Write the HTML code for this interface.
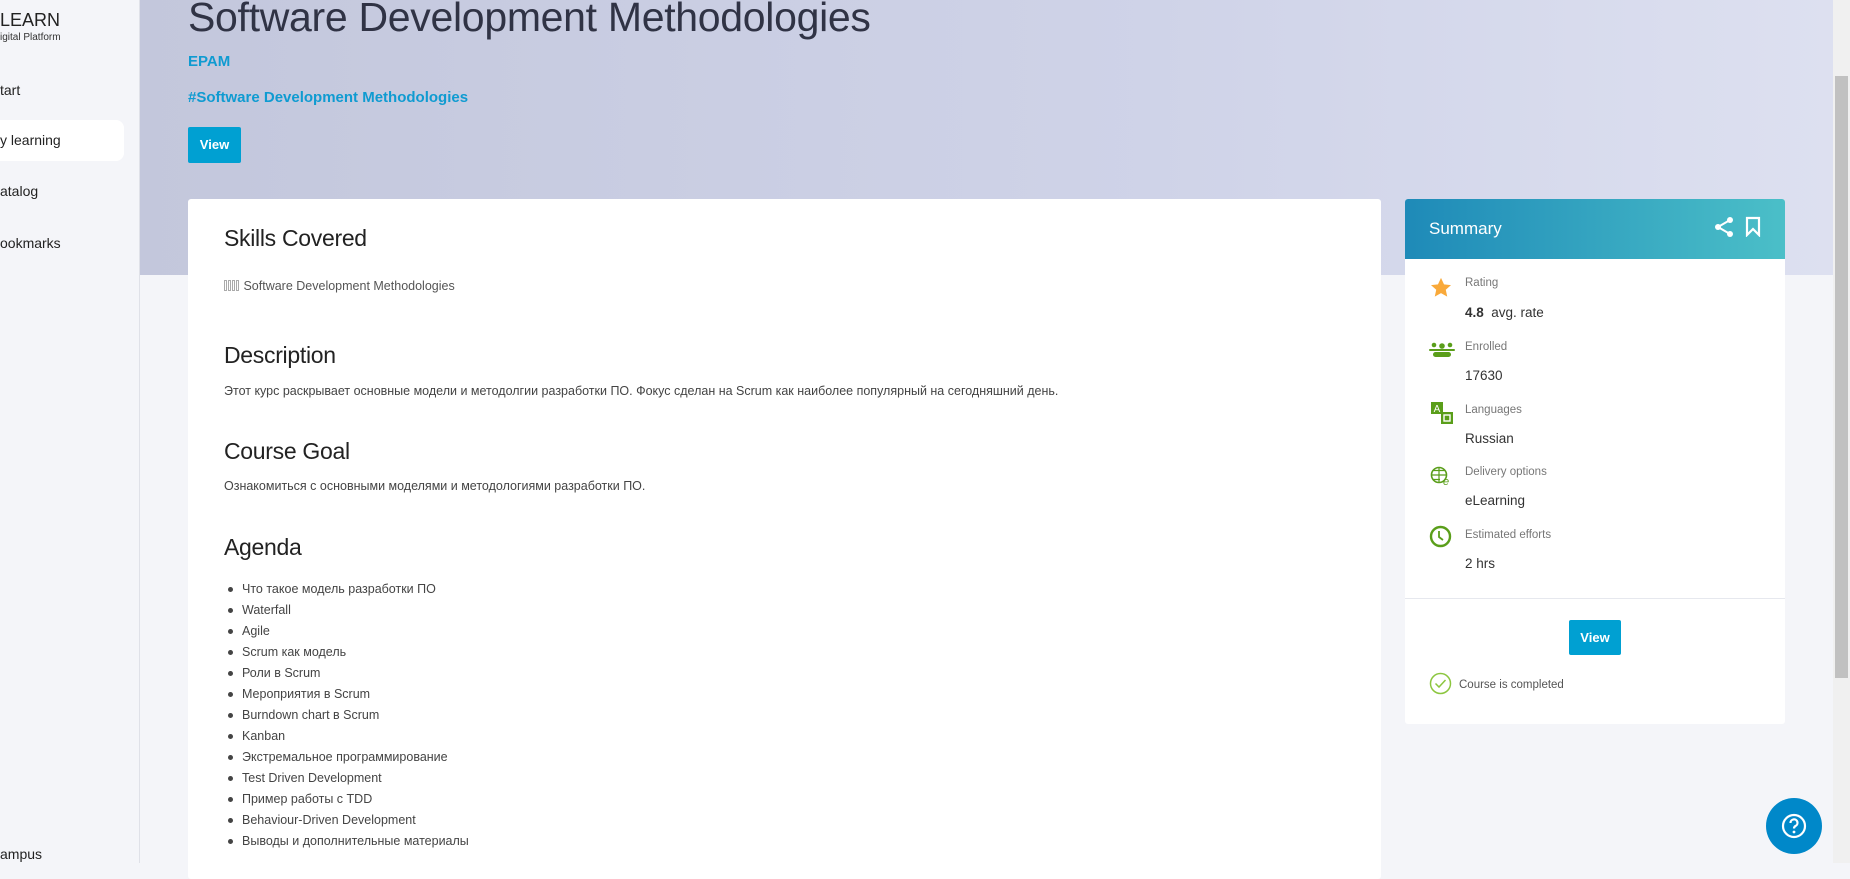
<!DOCTYPE html>
<html><head><meta charset="utf-8"><style>
*{margin:0;padding:0;box-sizing:border-box}
body{width:1850px;height:863px;overflow:hidden;background:#f4f5f9;font-family:"Liberation Sans","Noto Sans CJK SC",sans-serif;color:#464547;position:relative}
.side{position:absolute;left:0;top:0;width:140px;height:863px;background:#f4f5f9;border-right:1px solid #dfe1e8}
.side div{position:absolute;left:0;font-size:14px;color:#222}
.hero{position:absolute;left:140px;top:0;width:1693px;height:275px;background:linear-gradient(90deg,#c3c7dc,#cfd3e8 60%,#dde0f0)}
.t{position:absolute;font-family:"Liberation Sans",sans-serif}
.card{position:absolute;background:#fff;border-radius:3px}
h2{position:absolute;left:36px;font-size:23px;font-weight:normal;color:#222;letter-spacing:-.3px}
.p{position:absolute;left:36px;font-size:12.5px;color:#444}
ul{position:absolute;left:36px;top:380px;list-style:none}
li{height:21px;line-height:21px;font-size:12.5px;padding-left:18px;position:relative;color:#444}
li:before{content:"";position:absolute;left:4px;top:8px;width:5px;height:5px;border-radius:50%;background:#444}
.lbl{position:absolute;left:60px;font-size:11.5px;color:#777}
.val{position:absolute;left:60px;font-size:13.5px;color:#333}
.btn{position:absolute;background:#00a0d2;color:#fff;font-weight:bold;font-size:13px;text-align:center;border-radius:2px}
.sk{display:inline-block;width:3px;height:11px;border:1px solid #aaa;margin-right:1px;vertical-align:-1px}
</style></head><body>
<div class="side">
<div style="top:10px;font-size:18px;color:#222">LEARN</div>
<div style="top:32px;font-size:10px;color:#333">igital Platform</div>
<div style="top:82px">tart</div>
<div style="top:120px;width:124px;height:41px;background:#fff;border-radius:0 8px 8px 0"></div>
<div style="top:132px">y learning</div>
<div style="top:183px">atalog</div>
<div style="top:235px">ookmarks</div>
<div style="top:846px">ampus</div>
</div>
<div class="hero"></div>
<div class="t" style="left:188px;top:-6px;font-size:41px;color:#303345;letter-spacing:-.3px">Software Development Methodologies</div>
<div class="t" style="left:188px;top:53px;font-size:15px;color:#0f9bd1;font-weight:bold">EPAM</div>
<div class="t" style="left:188px;top:89px;font-size:15px;color:#0f9bd1;font-weight:bold">#Software Development Methodologies</div>
<div class="btn" style="left:188px;top:127px;width:53px;height:36px;line-height:36px">View</div>

<div class="card" style="left:188px;top:199px;width:1193px;height:680px">
<h2 style="top:26px">Skills Covered</h2>
<div class="p" style="top:80px;color:#555"><span class="sk"></span><span class="sk"></span><span class="sk"></span><span class="sk"></span> Software Development Methodologies</div>
<h2 style="top:143px">Description</h2>
<div class="p" style="top:185px">Этот курс раскрывает основные модели и методолгии разработки ПО. Фокус сделан на Scrum как наиболее популярный на сегодняшний день.</div>
<h2 style="top:239px">Course Goal</h2>
<div class="p" style="top:280px">Ознакомиться с основными моделями и методологиями разработки ПО.</div>
<h2 style="top:335px">Agenda</h2>
<ul>
<li>Что такое модель разработки ПО</li><li>Waterfall</li><li>Agile</li><li>Scrum как модель</li><li>Роли в Scrum</li><li>Мероприятия в Scrum</li><li>Burndown chart в Scrum</li><li>Kanban</li><li>Экстремальное программирование</li><li>Test Driven Development</li><li>Пример работы с TDD</li><li>Behaviour-Driven Development</li><li>Выводы и дополнительные материалы</li>
</ul>
</div>

<div class="card" style="left:1405px;top:199px;width:380px;height:525px;overflow:hidden">
<div style="height:60px;background:linear-gradient(90deg,#1e8ab8,#4bbfc8);position:relative">
<div style="position:absolute;left:24px;top:20px;color:#fff;font-size:17px">Summary</div>
<svg style="position:absolute;left:308px;top:17px" width="22" height="22" viewBox="0 0 22 22"><g fill="#fff"><circle cx="17" cy="4" r="3"/><circle cx="5" cy="11" r="3"/><circle cx="17" cy="18" r="3"/></g><path d="M17 4L5 11L17 18" stroke="#fff" stroke-width="2" fill="none"/></svg>
<svg style="position:absolute;left:340px;top:17px" width="16" height="21" viewBox="0 0 16 21"><path d="M2 2H14V19L8 13L2 19Z" stroke="#fff" stroke-width="2.2" fill="none"/></svg>
</div>
<svg style="position:absolute;left:25px;top:78px" width="22" height="22" viewBox="0 0 24 24"><path d="M12 1l3.3 7 7.6.8-5.7 5.1 1.6 7.5L12 17.6 5.2 21.4l1.6-7.5L1.1 8.8 8.7 8z" fill="#f9a93a"/></svg>
<div class="lbl" style="top:78px">Rating</div>
<div class="val" style="top:106px"><b>4.8</b>&nbsp; avg. rate</div>
<svg style="position:absolute;left:24px;top:143px" width="26" height="16" viewBox="0 0 26 16"><g fill="#5a9e1a"><circle cx="5" cy="3" r="2.3"/><circle cx="13" cy="4" r="2.8"/><circle cx="21" cy="3" r="2.3"/><rect x="0" y="7" width="26" height="2" rx="1"/><rect x="4" y="10" width="18" height="5" rx="2.5"/></g></svg>
<div class="lbl" style="top:142px">Enrolled</div>
<div class="val" style="top:169px">17630</div>
<svg style="position:absolute;left:25px;top:202px" width="24" height="24" viewBox="0 0 24 24"><rect x="1" y="1" width="12" height="12" fill="#5a9e1a"/><text x="7" y="11" font-size="10" fill="#fff" text-anchor="middle" font-family="Liberation Sans">A</text><rect x="11" y="11" width="12" height="12" fill="#5a9e1a"/><rect x="14" y="14" width="6" height="6" fill="none" stroke="#fff" stroke-width="1.4"/></svg>
<div class="lbl" style="top:205px">Languages</div>
<div class="val" style="top:232px">Russian</div>
<svg style="position:absolute;left:25px;top:267px" width="20" height="20" viewBox="0 0 20 20"><circle cx="9" cy="9" r="7.5" fill="none" stroke="#5a9e1a" stroke-width="1.6"/><path d="M1.5 9H16.5M9 1.5V16.5M3.5 4.5H14.5M3.5 13.5H10" stroke="#5a9e1a" stroke-width="1.2"/><text x="13" y="19" font-size="11" fill="#5a9e1a" font-style="italic" font-family="Liberation Sans">e</text></svg>
<div class="lbl" style="top:267px">Delivery options</div>
<div class="val" style="top:294px">eLearning</div>
<svg style="position:absolute;left:24px;top:326px" width="23" height="23" viewBox="0 0 23 23"><circle cx="11.5" cy="11.5" r="9.5" fill="none" stroke="#5a9e1a" stroke-width="2.4"/><path d="M10 6V12L14 15" stroke="#5a9e1a" stroke-width="1.8" fill="none"/></svg>
<div class="lbl" style="top:330px">Estimated efforts</div>
<div class="val" style="top:357px">2 hrs</div>
<div style="position:absolute;left:0;top:399px;width:380px;height:1px;background:#e6e8ee"></div>
<div class="btn" style="left:164px;top:421px;width:52px;height:35px;line-height:35px">View</div>
<svg style="position:absolute;left:24px;top:473px" width="23" height="23" viewBox="0 0 23 23"><circle cx="11.5" cy="11.5" r="10" fill="none" stroke="#8cc63f" stroke-width="1.5"/><path d="M6.5 11.5L10 15L16.5 8" stroke="#8cc63f" stroke-width="1.5" fill="none"/></svg>
<div class="lbl" style="left:54px;top:480px;color:#555">Course is completed</div>
</div>

<div style="position:absolute;left:1833px;top:0;width:17px;height:863px;background:#f0f0f0"></div>
<div style="position:absolute;left:1835px;top:76px;width:13px;height:602px;background:#c1c1c1"></div>
<div style="position:absolute;left:1766px;top:798px;width:56px;height:56px;border-radius:50%;background:#0088c9"></div>
<svg style="position:absolute;left:1781px;top:813px" width="26" height="26" viewBox="0 0 26 26"><circle cx="13" cy="13" r="11" fill="none" stroke="#fff" stroke-width="2.2"/><path d="M9.5 10a3.5 3.5 0 1 1 5 3c-1.2.7-1.5 1.3-1.5 2.5" stroke="#fff" stroke-width="2.2" fill="none"/><circle cx="13" cy="19" r="1.4" fill="#fff"/></svg>
</body></html>
